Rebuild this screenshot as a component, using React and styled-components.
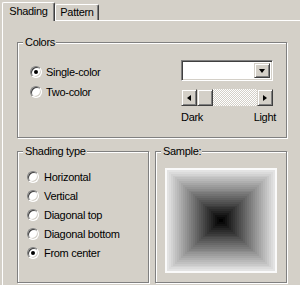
import styled, { createGlobalStyle } from "styled-components";

const GlobalStyle = createGlobalStyle`
  html, body {
    margin: 0;
    padding: 0;
    background: #d4d0c8;
  }
  body {
    font-family: "Liberation Sans", Arial, sans-serif;
    font-size: 11px;
    letter-spacing: -0.3px;
    color: #000;
  }
`;

const Window = styled.div`
  width: 300px;
  height: 285px;
  overflow: hidden;
  box-sizing: border-box;
  padding: 2px 0 0 2px;
  background: #d4d0c8;
`;

const TabStrip = styled.div`
  display: flex;
  align-items: flex-start;
  height: 18px;
  position: relative;
  z-index: 1;
`;

const Tab = styled.div`
  box-sizing: border-box;
  width: ${p => (p.active ? "53px" : "44px")};
  height: ${p => (p.active ? "19px" : "16px")};
  margin-top: ${p => (p.active ? "0" : "2px")};
  padding-top: ${p => (p.active ? "2px" : "1px")};
  text-align: center;
  line-height: 13px;
  background: #d4d0c8;
  border-left: 1px solid #fff;
  border-top: 1px solid #fff;
  border-right: 1px solid #404040;
  border-radius: 2px 2px 0 0;
  box-shadow: inset -1px 0 0 #808080;
`;

const Panel = styled.div`
  border-top: 1px solid #fff;
  border-left: 1px solid #fff;
  padding: 15px 0 0 14px;
  height: 300px;
`;

const Group = styled.fieldset`
  box-sizing: border-box;
  margin: 0;
  padding: 0;
  width: ${p => p.width}px;
  height: ${p => p.height}px;
  border: 1px solid #808080;
  box-shadow: inset 1px 1px 0 #fff, 1px 1px 0 #fff;
`;

const Legend = styled.legend`
  margin-left: 5px;
  padding: 0 1px 0 2px;
  line-height: 13px;
  background: #d4d0c8;
`;

const ColorsBody = styled.div`
  display: flex;
  justify-content: space-between;
  padding: 0 13px 0 12px;
`;

const RadioColumn = styled.div`
  display: flex;
  flex-direction: column;
  padding-top: ${p => p.top}px;
  padding-left: ${p => p.left || 0}px;
`;

const RadioRow = styled.label`
  display: flex;
  align-items: center;
  gap: ${p => p.gap}px;
  height: ${p => p.rowHeight}px;
`;

const Radio = styled.span`
  position: relative;
  box-sizing: border-box;
  width: 12px;
  height: 12px;
  border-radius: 50%;
  background: #fff;
  border: 1px solid;
  border-color: #808080 #fff #fff #808080;
  box-shadow: inset 1px 1px 0 #404040, inset -1px -1px 0 #d4d0c8;
  &::after {
    content: "";
    display: ${p => (p.checked ? "block" : "none")};
    position: absolute;
    left: 3px;
    top: 3px;
    width: 4px;
    height: 4px;
    border-radius: 50%;
    background: #000;
  }
`;

const Controls = styled.div`
  width: 92px;
  padding-top: 11px;
  display: flex;
  flex-direction: column;
`;

const Combo = styled.div`
  box-sizing: border-box;
  height: 21px;
  display: flex;
  justify-content: flex-end;
  padding: 2px;
  background: #fff;
  border: 1px solid;
  border-color: #808080 #fff #fff #808080;
  box-shadow: inset 1px 1px 0 #404040, inset -1px -1px 0 #d4d0c8;
`;

const RaisedButton = styled.div`
  box-sizing: border-box;
  width: ${p => p.width || 16}px;
  height: ${p => p.height || 17}px;
  display: flex;
  align-items: center;
  justify-content: center;
  background: #d4d0c8;
  border: 1px solid;
  border-color: #d4d0c8 #404040 #404040 #d4d0c8;
  box-shadow: inset 1px 1px 0 #fff, inset -1px -1px 0 #808080;
`;

const Arrow = styled.span`
  width: 0;
  height: 0;
  border-style: solid;
  border-color: transparent;
  ${p =>
    p.dir === "down" &&
    "border-width: 4px 3.5px 0 3.5px; border-top-color: #000; margin-top: 1px;"}
  ${p =>
    p.dir === "left" &&
    "border-width: 3.5px 4px 3.5px 0; border-right-color: #000;"}
  ${p =>
    p.dir === "right" &&
    "border-width: 3.5px 0 3.5px 4px; border-left-color: #000;"}
`;

const ScrollBar = styled.div`
  display: flex;
  height: 17px;
  margin-top: 8px;
`;

const Track = styled.div`
  flex: 1;
  background-color: #fff;
  background-image: repeating-conic-gradient(#d4d0c8 0 25%, #fff 0 50%);
  background-size: 2px 2px;
`;

const ScaleLabels = styled.div`
  display: flex;
  justify-content: space-between;
  margin: 5px -3px 0 0;
  line-height: 13px;
`;

const BottomRow = styled.div`
  display: flex;
  gap: 6px;
  margin-top: 7px;
`;

const SampleBody = styled.div`
  padding: 10px 0 0 9px;
`;

const SAMPLE_W = 112;
const SAMPLE_H = 105;
const STEPS = 28;

const SamplePyramid = () => {
  const rects = [];
  for (let k = 0; k < STEPS; k++) {
    const t = k / (STEPS - 1);
    const v = k === 0 ? 250 : Math.round(236 * (1 - t));
    const dx = (k * SAMPLE_W) / 2 / STEPS;
    const dy = (k * SAMPLE_H) / 2 / STEPS;
    rects.push(
      <rect
        key={k}
        x={dx}
        y={dy}
        width={SAMPLE_W - 2 * dx}
        height={SAMPLE_H - 2 * dy}
        fill={`rgb(${v},${v},${v})`}
      />
    );
  }
  return (
    <svg width={SAMPLE_W} height={SAMPLE_H} shapeRendering="crispEdges">
      {rects}
    </svg>
  );
};

const shadingTypes = [
  "Horizontal",
  "Vertical",
  "Diagonal top",
  "Diagonal bottom",
  "From center",
];

const App = () => (
  <>
    <GlobalStyle />
    <Window>
      <TabStrip>
        <Tab active>Shading</Tab>
        <Tab>Pattern</Tab>
      </TabStrip>
      <Panel>
        <Group width={270} height={102}>
          <Legend>Colors</Legend>
          <ColorsBody>
            <RadioColumn top={13}>
              <RadioRow gap={4} rowHeight={20}>
                <Radio checked />
                Single-color
              </RadioRow>
              <RadioRow gap={4} rowHeight={20}>
                <Radio />
                Two-color
              </RadioRow>
            </RadioColumn>
            <Controls>
              <Combo>
                <RaisedButton height={15} width={16}>
                  <Arrow dir="down" />
                </RaisedButton>
              </Combo>
              <ScrollBar>
                <RaisedButton>
                  <Arrow dir="left" />
                </RaisedButton>
                <RaisedButton />
                <Track />
                <RaisedButton>
                  <Arrow dir="right" />
                </RaisedButton>
              </ScrollBar>
              <ScaleLabels>
                <span>Dark</span>
                <span>Light</span>
              </ScaleLabels>
            </Controls>
          </ColorsBody>
        </Group>
        <BottomRow>
          <Group width={132} height={138}>
            <Legend>Shading type</Legend>
            <RadioColumn top={9} left={9}>
              {shadingTypes.map(name => (
                <RadioRow key={name} gap={5} rowHeight={19}>
                  <Radio checked={name === "From center"} />
                  {name}
                </RadioRow>
              ))}
            </RadioColumn>
          </Group>
          <Group width={132} height={138}>
            <Legend>Sample:</Legend>
            <SampleBody>
              <SamplePyramid />
            </SampleBody>
          </Group>
        </BottomRow>
      </Panel>
    </Window>
  </>
);

export default App;
